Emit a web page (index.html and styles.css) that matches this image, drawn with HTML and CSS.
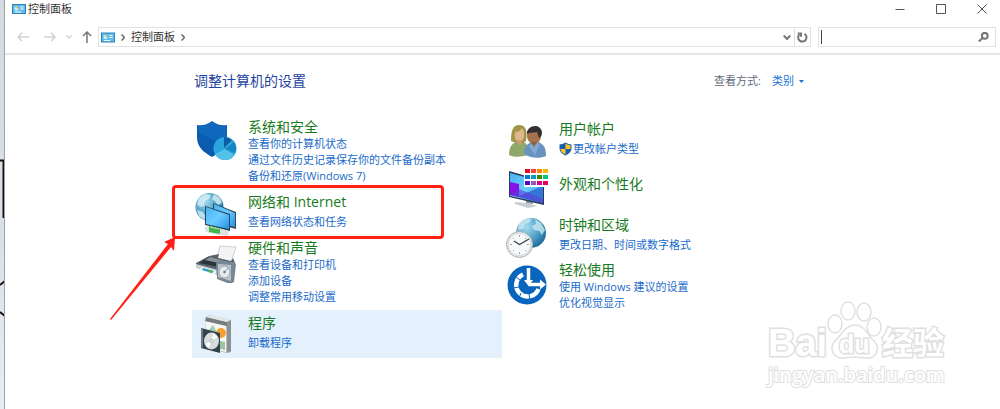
FILE: index.html
```html
<!DOCTYPE html>
<html lang="zh-CN">
<head>
  <meta charset="UTF-8">
  <meta name="viewport" content="width=device-width, initial-scale=1.0">
  <title>控制面板</title>
  <link rel="stylesheet" href="styles.css">
</head>
<body>
  <div class="desktop-edge">
    <svg width="5" height="409" viewBox="0 0 5 409" fill="none" stroke="#111" stroke-width="2">
      <path d="M0 160.500h3.500V218M0 285l5-4M0 312l5 4"/>
    </svg>
  </div>

  <div class="window">
    <header class="title-bar">
      <svg class="panel-icon" width="14" height="10" viewBox="0 0 14 10">
        <rect x=".5" y=".5" width="13" height="9" fill="#5fbdf0" stroke="#2d83b5"/>
        <circle cx="4.500" cy="4.500" r="2" fill="#d9f2ff"/><path d="M4.500 4.500v-2a2 2 0 0 1 2 2z" fill="#f5a623"/>
        <path d="M8.500 3h3M8.500 5h3M3 8h6" stroke="#fff"/>
      </svg>
      <span class="window-name">控制面板</span>
      <div class="window-buttons">
        <button aria-label="最小化"><svg width="10" height="10" viewBox="0 0 10 10"><path d="M0.500 5.500h9"/></svg></button>
        <button aria-label="最大化"><svg width="10" height="10" viewBox="0 0 10 10"><path d="M.5.5h9v9h-9z"/></svg></button>
        <button aria-label="关闭"><svg width="10" height="10" viewBox="0 0 10 10"><path d="M.5.5l9 9M9.500.5l-9 9"/></svg></button>
      </div>
    </header>

    <nav class="toolbar">
      <button class="nav-button faded" aria-label="后退"><svg width="12" height="10" viewBox="0 0 12 10"><path d="M5 .8L1 5l4 4.200M1 5h11"/></svg></button>
      <button class="nav-button faded" aria-label="前进"><svg width="12" height="10" viewBox="0 0 12 10"><path d="M7 .8L11 5 7 9.200M11 5H0"/></svg></button>
      <button class="nav-button recent faded" aria-label="最近浏览的位置"><svg width="6" height="4" viewBox="0 0 6 4"><path d="M.5.5L3 3 5.500.5"/></svg></button>
      <button class="nav-button up" aria-label="上移"><svg width="10" height="12" viewBox="0 0 10 12"><path d="M1 5l4-4 4 4M5 1v11"/></svg></button>
      <div class="address">
        <svg class="panel-icon" width="14" height="11" viewBox="0 0 14 10">
          <rect x=".5" y=".5" width="13" height="9" fill="#5fbdf0" stroke="#2d83b5"/>
          <circle cx="4.500" cy="4.500" r="2" fill="#d9f2ff"/><path d="M4.500 4.500v-2a2 2 0 0 1 2 2z" fill="#f5a623"/>
          <path d="M8.500 3h3M8.500 5h3M3 8h6" stroke="#fff"/>
        </svg>
        <svg class="crumb-arrow" width="4" height="7" viewBox="0 0 4 7"><path d="M.5.5l3 3-3 3"/></svg>
        <a class="crumb" href="#">控制面板</a>
        <svg class="crumb-arrow" width="4" height="7" viewBox="0 0 4 7"><path d="M.5.5l3 3-3 3"/></svg>
        <button class="address-menu" aria-label="以前的位置"><svg width="8" height="5" viewBox="0 0 8 5"><path d="M.7.500L4 4 7.300.5"/></svg></button>
        <button class="refresh" aria-label="刷新"><svg width="11" height="11" viewBox="0 0 11 11"><path d="M7.500 1.800A4.200 4.200 0 1 1 2.300 2.500M.8 1.500h3.200v3.200"/></svg></button>
      </div>
      <div class="search">
        <span class="caret"></span>
        <input type="text" aria-label="搜索控制面板">
        <svg width="11" height="10" viewBox="0 0 11 10"><circle cx="6.800" cy="3.800" r="2.900"/><path d="M4.600 6L.8 9.500"/></svg>
      </div>
    </nav>

    <main class="content">
      <div class="content-head">
        <h1>调整计算机的设置</h1>
        <div class="view-by">
          <span>查看方式:</span>
          <button>类别 <svg width="5" height="3" viewBox="0 0 5 3"><path d="M0 0h5L2.500 3z"/></svg></button>
        </div>
      </div>

      <div class="columns">
        <div class="column left">
          <section class="category">
            <svg class="icon" viewBox="0 0 44 44">
              <path d="M3 7c7 1 11-1 15-4 4 3 8 5 15 4v12c0 11-7 15-15 20C10 34 3 30 3 19z" fill="#0b5cb0"/>
              <path d="M4 8c6 1 10-1 14-4 4 3 8 5 14 4v11c0 3-1 6-3 8L4 14z" fill="#1068bd"/>
              <circle cx="31" cy="30.500" r="11.500" fill="#2ba6dc"/>
              <path d="M21 36a11.500 11.500 0 0 0 13 5.500L40 37 31 31z" fill="#52c2ea"/>
              <path d="M30 30V19a11.500 11.500 0 0 1 8 3z" fill="#0d5da6"/><path d="M31 31l9-7c2 3 3 7 1 11z" fill="#1786c4"/>
            </svg>
            <div class="texts">
              <h2><a href="#">系统和安全</a></h2>
              <a href="#">查看你的计算机状态</a>
              <a href="#">通过文件历史记录保存你的文件备份副本</a>
              <a href="#">备份和还原(Windows 7)</a>
            </div>
          </section>

          <section class="category roomy marked">
            <svg class="icon" viewBox="0 0 44 44">
              <defs>
                <radialGradient id="globe" cx=".35" cy=".3" r=".75"><stop offset="0" stop-color="#a7dbef"/><stop offset=".6" stop-color="#4b9dc6"/><stop offset="1" stop-color="#1f6795"/></radialGradient>
                <linearGradient id="screen" x2="1" y2="1"><stop offset="0" stop-color="#46b4f4"/><stop offset=".5" stop-color="#6bcbff"/><stop offset="1" stop-color="#1f93e5"/></linearGradient>
              </defs>
              <circle cx="15.500" cy="14" r="14" fill="url(#globe)"/>
              <path d="M5 5l6-4 6 1-2 4-4 2-1 5-4 1-3-3zM20 1l6 4 2 5-4 2-3-4-3-2zM3 17l6 2 3 5-2 3-5-4z" fill="#d8f0f5" opacity=".8"/>
              <path d="M19 10l23 9v17l-23-6z" fill="#34495a"/><path d="M20 11l21 9v14l-21-5z" fill="url(#screen)"/>
              <path d="M11 13l25 8v17l-25-6z" fill="#29475c"/><path d="M12 14l23 8v14l-23-5z" fill="url(#screen)"/>
              <path d="M10 35l5-2 16 4 4 1-1 5-8-1-14-3z" fill="#dce2e3"/><path d="M15 33l11 3v5l-11-2z" fill="#46b549"/><path d="M16 34l9 2" stroke="#a3eba3"/>
            </svg>
            <div class="texts">
              <h2><a href="#">网络和 Internet</a></h2>
              <a href="#">查看网络状态和任务</a>
            </div>
            <div class="red-frame"></div>
            <svg class="red-arrow" width="68" height="84" viewBox="0 0 68 84"><path d="M65 0L54 5l4 2L0 82l1 1L61 10l3 4z" fill="#fe2015"/></svg>
          </section>

          <section class="category">
            <svg class="icon" viewBox="0 0 44 44">
              <path d="M26 7l16 1-5 15-14-4z" fill="#f2f4f6" stroke="#b9c1c7" stroke-width=".7"/>
              <path d="M15 17l10-2-1 4 13 3 2-3 2 5v8L21 35 2 28v-4z" fill="#596169"/>
              <path d="M15 18l20 6-10 4-20-4z" fill="#2c343b"/><path d="M16 18l18 5-5 2-18-4z" fill="#89949b"/>
              <path d="M2 25l22 6 17-6v4l-17 7-22-7z" fill="#c9d0d4"/>
              <path d="M8 28l15 4-3 4-15-5z" fill="#eef6f7"/><path d="M9 29l11 3-2 2-10-3z" fill="#2f9dc8"/><path d="M15 31l4 1-1 2-4-1z" fill="#5eb24c"/>
              <path d="M22 24l4-2 14 1 2 2-2 18-4 2-13-5z" fill="#788794"/><path d="M24 25l13 1v16l-13-4z" fill="#b9c4cc"/>
              <ellipse cx="30.500" cy="33" rx="5.500" ry="6" fill="#e6eaed" stroke="#77838d" stroke-width=".6"/><circle cx="30.500" cy="33" r="1.200" fill="#687680"/><path d="M31 33l3-4" stroke="#8b969e"/>
            </svg>
            <div class="texts">
              <h2><a href="#">硬件和声音</a></h2>
              <a href="#">查看设备和打印机</a>
              <a href="#">添加设备</a>
              <a href="#">调整常用移动设置</a>
            </div>
          </section>

          <section class="category roomy selected">
            <svg class="icon" viewBox="0 0 44 44">
              <path d="M12 3l3-2 22 5v32l-4 1-22-5z" fill="#b9bdbf"/><path d="M12 7l20 5v26l-20-5z" fill="#f5f6f4"/>
              <path d="M12 3l21 5v4L11 7z" fill="#777c7f"/><path d="M12 3l3-2 22 5-4 2z" fill="#e5e6e6"/><path d="M33 8l4-2v31l-4 2z" fill="#8c9194"/>
              <path d="M13 18l6-7 5 9-4 4z" fill="#9dcdb4"/><circle cx="27" cy="19" r="5" fill="#f6a12e"/><path d="M26 27l5 1v8l-5-1z" fill="#9bc3a4"/>
              <path d="M7 14l19 5v20L7 34z" fill="#34424b"/><path d="M7 14l2 1v19l-2-1z" fill="#6d7d87"/>
              <ellipse cx="17.500" cy="27" rx="7.500" ry="8.500" fill="#d7dcde"/><path d="M17.500 27l2-8 4 4z" fill="#fff"/><path d="M17.500 27l-3 7-3-4z" fill="#fff"/>
              <circle cx="17.500" cy="27" r="2" fill="#a9b4b9"/><circle cx="17.500" cy="27" r="1" fill="#fff"/>
            </svg>
            <div class="texts">
              <h2><a href="#">程序</a></h2>
              <a href="#">卸载程序</a>
            </div>
          </section>
        </div>

        <div class="column right">
          <section class="category roomy">
            <svg class="icon" viewBox="0 0 44 44">
              <path d="M4 35c0-8 3-12 8-13h6c4 1 6 5 6 12-5 3-15 4-20 1z" fill="#8fa96a"/>
              <path d="M6 21c0-11 2-16 8-16s9 4 7 16l-3 2h-7z" fill="#a09645"/><path d="M10 12c4 0 6-2 7-4 3 3 3 11-1 14-4 1-7-2-6-10z" fill="#dfb78e"/><path d="M12 20h5l-1 5-3-1z" fill="#ce9c74"/>
              <path d="M19 34c0-7 3-11 9-12h5c6 2 8 6 8 14-6 3-17 2-22-2z" fill="#6992c1"/><path d="M24 26l6 9 5-11-6-2z" fill="#83a9d2"/>
              <ellipse cx="29" cy="16" rx="7" ry="8" fill="#a5744d"/><path d="M22 14c-1-8 13-12 15-2 0 4-2 6-3 6l-2-6c-4 1-7 0-10 2z" fill="#343030"/><path d="M26 22h6l-3 5z" fill="#8e603e"/>
            </svg>
            <div class="texts">
              <h2><a href="#">用户帐户</a></h2>
              <a class="with-shield" href="#"><svg width="13" height="14" viewBox="0 0 13 14"><path d="M.5 2.500c2 0 4-1 6-2 2 1 4 2 6 2v3.500c0 4-3 6-6 7.500C3.500 12 .5 10 .5 6z" fill="#175fac"/><path d="M6.500 1.500c2 1 3 1.500 5 2V7h-5z" fill="#fbc32d"/><path d="M1.500 7h5v5.500c-3-1.500-5-3-5-5.500z" fill="#fbc32d"/></svg>更改帐户类型</a>
            </div>
          </section>

          <section class="category title-only">
            <svg class="icon" viewBox="0 0 44 44">
              <path d="M10 37l12 1 10 3-9 2-13-4z" fill="#c8cdd0"/><path d="M21 34h6l1 5-7-1z" fill="#8c959b"/>
              <path d="M4 6l35 10v24L4 32z" fill="#283c59"/><path d="M5 8l33 9v21L5 31z" fill="url(#screen)"/>
              <path d="M5 17l9 2v13l-9-2z" fill="#8812e5"/><path d="M14 31l24-10v17l-24-6z" fill="#3575d5"/><path d="M5 30l9-6 24 10v4z" fill="#5b38d8" opacity=".6"/>
              <path d="M19 3h24v19H19z" fill="#fff"/>
              <path d="M20 4h5v4h-5z" fill="#df1028"/><path d="M26 4h5v4h-5z" fill="#fa4141"/><path d="M32 4h5v4h-5z" fill="#fa8500"/><path d="M38 4h5v4h-5z" fill="#fbb500"/>
              <path d="M20 10h5v4h-5z" fill="#0878d2"/><path d="M26 10h5v4h-5z" fill="#0d9bc2"/><path d="M32 10h5v4h-5z" fill="#408700"/><path d="M38 10h5v4h-5z" fill="#00c878"/>
              <path d="M20 16h5v4h-5z" fill="#5107c7"/><path d="M26 16h5v4h-5z" fill="#8962b5"/><path d="M32 16h5v4h-5z" fill="#df008a"/><path d="M38 16h5v4h-5z" fill="#e6005e"/>
            </svg>
            <div class="texts">
              <h2><a href="#">外观和个性化</a></h2>
            </div>
          </section>

          <section class="category roomy">
            <svg class="icon" viewBox="0 0 44 44">
              <circle cx="26" cy="17" r="15" fill="url(#globe)"/>
              <path d="M14 7l8-5 5 1-3 4-4 1-2 5-5 1zM30 3l6 4 4 7-3 5-3-4-5-1-2-4 4-2z" fill="#c9e9ef" opacity=".8"/>
              <circle cx="14.500" cy="28.500" r="13" fill="#e2e7ea" stroke="#a9b1b7"/><circle cx="14.500" cy="28.500" r="11" fill="#f8fafb" stroke="#c9ced1" stroke-width=".6"/>
              <path d="M14.500 19v2M14.500 36v2M5 28.500h2M22 28.500h2M8 22l1 1M20 34l1 1M8 35l1-1M20 23l1-1" stroke="#9aa2a8"/>
              <path d="M9 25l5.500 3.500L24 23" fill="none" stroke="#354047" stroke-width="1.300"/>
            </svg>
            <div class="texts">
              <h2><a href="#">时钟和区域</a></h2>
              <a href="#">更改日期、时间或数字格式</a>
            </div>
          </section>

          <section class="category">
            <svg class="icon" viewBox="0 0 44 44">
              <circle cx="22" cy="24" r="19.500" fill="#0865bd"/>
              <path d="M18 13.500a11.500 11.500 0 1 0 15.500 14.500" fill="none" stroke="#fff" stroke-width="4.500"/>
              <path d="M11 16l4 3M8 27l6-1M14 37l2-5M25 39l-1-6" stroke="#0865bd"/>
              <path d="M23.500 7v15M23 23.500h14" stroke="#0865bd" stroke-width="6"/>
              <path d="M23.500 7v15M23.500 23.500h13" stroke="#fff" stroke-width="3.500"/><path d="M19 19h9l-4.500 6zM35 18.500v10l6-5z" fill="#fff"/>
            </svg>
            <div class="texts">
              <h2><a href="#">轻松使用</a></h2>
              <a href="#">使用 Windows 建议的设置</a>
              <a href="#">优化视觉显示</a>
            </div>
          </section>
        </div>
      </div>
    </main>
  </div>

  <svg class="watermark" width="186" height="92" viewBox="0 0 186 92">
    <text class="wm-latin" x="3" y="56" font-size="38">Bai</text>
    <ellipse cx="70" cy="24" rx="7" ry="9"/>
    <ellipse cx="83" cy="11" rx="7" ry="9"/>
    <ellipse cx="99" cy="12" rx="7" ry="9"/>
    <ellipse cx="109" cy="27" rx="7" ry="9"/>
    <path d="M90 25c10 0 13 11 20 17 6 8 0 17-9 16-8-1-14-1-22 0-10 1-15-8-10-16 7-6 11-17 21-17z"/>
    <text class="wm-latin" x="74" y="53" font-size="25">du</text>
    <text class="wm-cjk" x="117" y="54" font-size="31">经验</text>
    <text class="wm-site" x="3" y="82" font-size="20">jingyan.baidu.com</text>
  </svg>
</body>
</html>
```

FILE: styles.css
```css
* {
  box-sizing: border-box;
}
body {
  margin: 0;
  min-height: 100vh;
  display: flex;
  position: relative;
  overflow: hidden;
  background-color: #fff;
  color: #333;
  font-family: "Open Sans", "Noto Sans CJK SC", sans-serif;
  font-size: 11px;
  line-height: 16px;
}
a {
  color: #1a6bc9;
  text-decoration: none;
}
button {
  display: flex;
  align-items: center;
  justify-content: center;
  margin: 0;
  padding: 0;
  border: none;
  background: none;
  font: inherit;
}
svg {
  display: block;
  flex: none;
}
.desktop-edge {
  width: 5px;
  flex: none;
  overflow: hidden;
  background: linear-gradient(#d5dbe1, #dce0e7 60%, #e7eff4);
  border-right: 1px solid #9da1a5;
}
.window {
  flex: 1;
  min-width: 0;
}

/* title bar */
.title-bar {
  display: flex;
  align-items: center;
  height: 18px;
  padding-left: 7px;
}
.window-name {
  margin-left: 2px;
}
.window-buttons {
  display: flex;
  gap: 5px;
  margin-left: auto;
}
.window-buttons button {
  width: 36px;
  height: 18px;
}
.window-buttons path {
  fill: none;
  stroke: #555;
}

/* address and search */
.toolbar {
  display: flex;
  margin-top: 9px;
  padding: 0 4px 6px;
  border-bottom: 2px solid #e4e5e6;
}
.nav-button {
  width: 27px;
  height: 20px;
  fill: none;
  stroke: #777;
  stroke-width: 1.5;
}
.nav-button.recent {
  width: 12px;
}
.nav-button.up {
  width: 23px;
}
.nav-button.faded {
  stroke: #d2d2d2;
}
.address {
  flex: 1;
  display: flex;
  align-items: center;
  height: 20px;
  padding-left: 2px;
  border: 1px solid #e2e2e2;
}
.crumb-arrow {
  margin: 0 6px;
  fill: none;
  stroke: #666;
  stroke-width: 1.5;
}
.crumb {
  color: #333;
}
.address-menu {
  width: 14px;
  height: 18px;
  margin-left: auto;
  fill: none;
  stroke: #777;
  stroke-width: 2;
}
.refresh {
  width: 16px;
  height: 18px;
  border-left: 1px solid #e2e2e2;
  fill: none;
  stroke: #777;
  stroke-width: 2;
}
.search {
  display: flex;
  align-items: center;
  width: 18%;
  height: 20px;
  margin-left: 7px;
  padding: 0 6px 0 2px;
  border: 1px solid #e2e2e2;
}
.search input {
  flex: 1;
  min-width: 0;
  height: 16px;
  padding: 0;
  border: none;
  outline: none;
  font: inherit;
}
.search svg {
  fill: none;
  stroke: #777;
  stroke-width: 2;
}
.caret {
  width: 1px;
  height: 14px;
  background-color: #444;
}

/* categories */
.content {
  max-width: 621px;
  margin: 0 auto;
  padding-top: 16px;
}
.content-head {
  display: flex;
  align-items: center;
  justify-content: space-between;
  padding: 0 9px 0 2px;
}
h1 {
  margin: 0;
  color: #1f449f;
  font-size: 14px;
  font-weight: normal;
  line-height: 20px;
}
.view-by {
  display: flex;
  gap: 11px;
  color: #5f6c80;
}
.view-by button {
  gap: 5px;
  color: #1a72d4;
  fill: #1a72d4;
}
.columns {
  display: grid;
  grid-template-columns: 1fr 1fr;
  column-gap: 1px;
  margin-top: 23px;
}
.column {
  display: flex;
  flex-direction: column;
}
.column.left {
  gap: 1px;
}
.column.right {
  padding-top: 2px;
}
.category {
  position: relative;
  display: flex;
  align-items: flex-start;
  gap: 10px;
  padding: 4px 2px;
}
.icon {
  width: 44px;
  height: 44px;
  margin-bottom: -8px;
}
.texts {
  display: flex;
  flex-direction: column;
  align-items: flex-start;
  white-space: nowrap;
}
.category h2 {
  margin: 0;
  font-size: 14px;
  font-weight: normal;
  line-height: 18px;
}
.category h2 a {
  color: #187a20;
}
.roomy h2 {
  margin-bottom: 3px;
}
.title-only .texts {
  padding: 10px 0 15px;
}
.selected {
  padding-bottom: 7px;
  background-color: #e4f1fd;
}
.with-shield {
  display: flex;
  align-items: center;
  gap: 1px;
}

/* red mark around the network category */
.red-frame {
  position: absolute;
  left: -20px;
  top: -4px;
  width: 272px;
  height: 54px;
  border: 3px solid #fe2015;
  border-radius: 4px;
}
.red-arrow {
  position: absolute;
  left: -82px;
  top: 48px;
}

.watermark {
  position: absolute;
  right: 49px;
  bottom: 17px;
  fill: #fff;
  stroke: #e0e0e0;
  stroke-width: 1.5;
}
.wm-latin {
  font-family: "Liberation Sans", Arial, sans-serif;
  font-weight: bold;
  paint-order: stroke;
  stroke-width: 3;
}
.wm-cjk {
  font-family: "Noto Sans CJK SC", sans-serif;
  font-weight: bold;
  paint-order: stroke;
  stroke-width: 3;
}
.wm-site {
  font-family: "Open Sans", sans-serif;
  font-weight: 600;
  paint-order: stroke;
  stroke-width: 2;
}
```
